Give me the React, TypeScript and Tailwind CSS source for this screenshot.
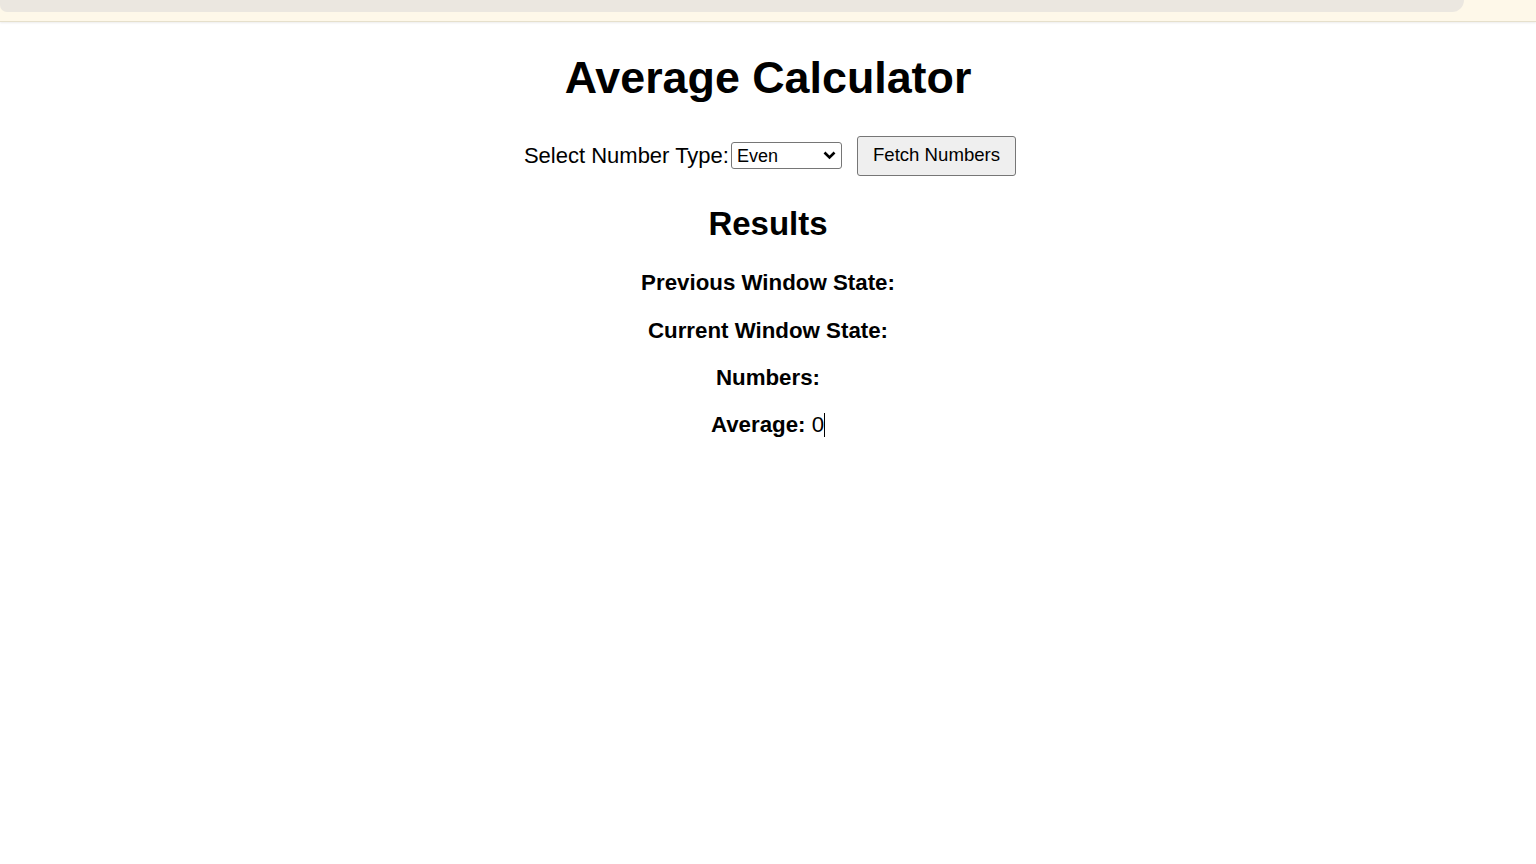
import { useState } from "react";

const font = "font-['Liberation_Sans',Arial,sans-serif]";

export default function App() {
  const [type, setType] = useState("e");

  return (
    <div className={`min-h-screen bg-white text-black ${font}`}>
      {/* browser chrome remnant */}
      <div className="h-[22px] bg-[#fef8e9] border-b border-[#e6e0cc] shadow-[0_1px_2px_rgba(0,0,0,0.08)]">
        <div className="h-[12px] ml-0 mr-[72px] bg-[#ebe7e0] rounded-b-[14px] rounded-br-[24px]" />
      </div>

      <div className="flex flex-col items-center">
        <h1 className="text-[44.8px] font-bold leading-[1.15] mt-[30px] mb-[32px]">
          Average Calculator
        </h1>

        <div className="flex items-center ml-[4px]">
          <label className="text-[22px] leading-none">Select Number Type:</label>
          <div className="relative ml-[2px]">
            <select
              value={type}
              onChange={(e) => setType(e.target.value)}
              className="appearance-none w-[111px] h-[27px] border border-[#767676] rounded-[3px] bg-white pl-[5px] text-[18px] leading-none outline-none"
            >
              <option value="p">Prime</option>
              <option value="f">Fibonacci</option>
              <option value="e">Even</option>
              <option value="r">Random</option>
            </select>
            <svg
              className="absolute right-[6px] top-[9px] pointer-events-none"
              width="13"
              height="9"
              viewBox="0 0 13 9"
              fill="none"
            >
              <path d="M1.5 1.5L6.5 6.5L11.5 1.5" stroke="#000" strokeWidth="2.6" />
            </svg>
          </div>
          <button className="ml-[15px] h-[40px] px-[15px] bg-[#efefef] border border-[#767676] rounded-[3px] text-[18.6px] leading-none">
            Fetch Numbers
          </button>
        </div>

        <h2 className="text-[33px] font-bold leading-[1.15] mt-[29px] mb-[28px]">Results</h2>

        <div className="flex flex-col items-center gap-[21.5px] text-[22.3px] leading-[1.15]">
          <p className="font-bold">Previous Window State:</p>
          <p className="font-bold">Current Window State:</p>
          <p className="font-bold">Numbers:</p>
          <p>
            <span className="font-bold">Average:</span> 0
            <span className="inline-block w-px h-[24px] bg-black align-[-5px]" />
          </p>
        </div>
      </div>
    </div>
  );
}
